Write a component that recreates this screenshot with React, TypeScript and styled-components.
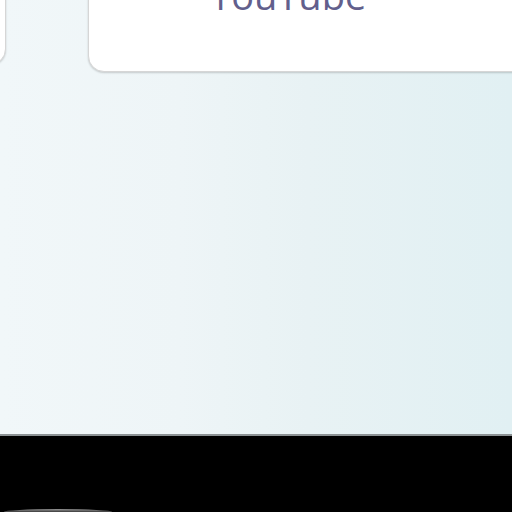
import React from "react";
import styled, { createGlobalStyle } from "styled-components";

const Global = createGlobalStyle`
  html, body { margin: 0; padding: 0; width: 512px; height: 512px; overflow: hidden; background: #000; }
  #root { width: 512px; height: 512px; }
`;

const Page = styled.div`
  width: 512px;
  height: 512px;
  display: flex;
  flex-direction: column;
  font-family: "Open Sans", "Noto Sans", sans-serif;
`;

const Stage = styled.div`
  height: 434px;
  flex: none;
  background: linear-gradient(90deg, #f1f7f9 0%, #eef5f7 35%, #e8f2f4 60%, #e1f0f3 100%);
  border-bottom: 2px solid #8c9294;
  overflow: hidden;
`;

const CardRow = styled.div`
  display: flex;
  gap: 82px;
  margin-left: -200px;
  align-items: flex-start;
`;

const Card = styled.div<{ $w: number; $h: number }>`
  flex: none;
  width: ${(p) => p.$w}px;
  height: ${(p) => p.$h}px;
  margin-top: -40px;
  background: #ffffff;
  border: 1px solid #d6d6d6;
  border-radius: 16px;
  box-shadow: 0 1px 2px rgba(0, 0, 0, 0.18);
  box-sizing: border-box;
  display: flex;
  align-items: flex-end;
`;

const Label = styled.div`
  font-size: 38px;
  line-height: 1;
  color: #625f8c;
  padding-left: 121px;
  padding-bottom: 57px;
  white-space: nowrap;
`;

const Bottom = styled.div`
  flex: 1;
  background: #000;
  display: flex;
  flex-direction: column;
  justify-content: flex-end;
  padding-left: 4px;
  overflow: hidden;
`;

const Pill = styled.div`
  width: 108px;
  height: 3px;
  border-radius: 54px 54px 0 0 / 3px 3px 0 0;
  background: linear-gradient(180deg, #9a9a9a 0%, #3a3a3a 100%);
`;

export default function App() {
  return (
    <>
      <Global />
      <Page>
        <Stage>
          <CardRow>
            <Card $w={206} $h={105} />
            <Card $w={480} $h={112}>
              <Label>YouTube</Label>
            </Card>
          </CardRow>
        </Stage>
        <Bottom>
          <Pill />
        </Bottom>
      </Page>
    </>
  );
}
